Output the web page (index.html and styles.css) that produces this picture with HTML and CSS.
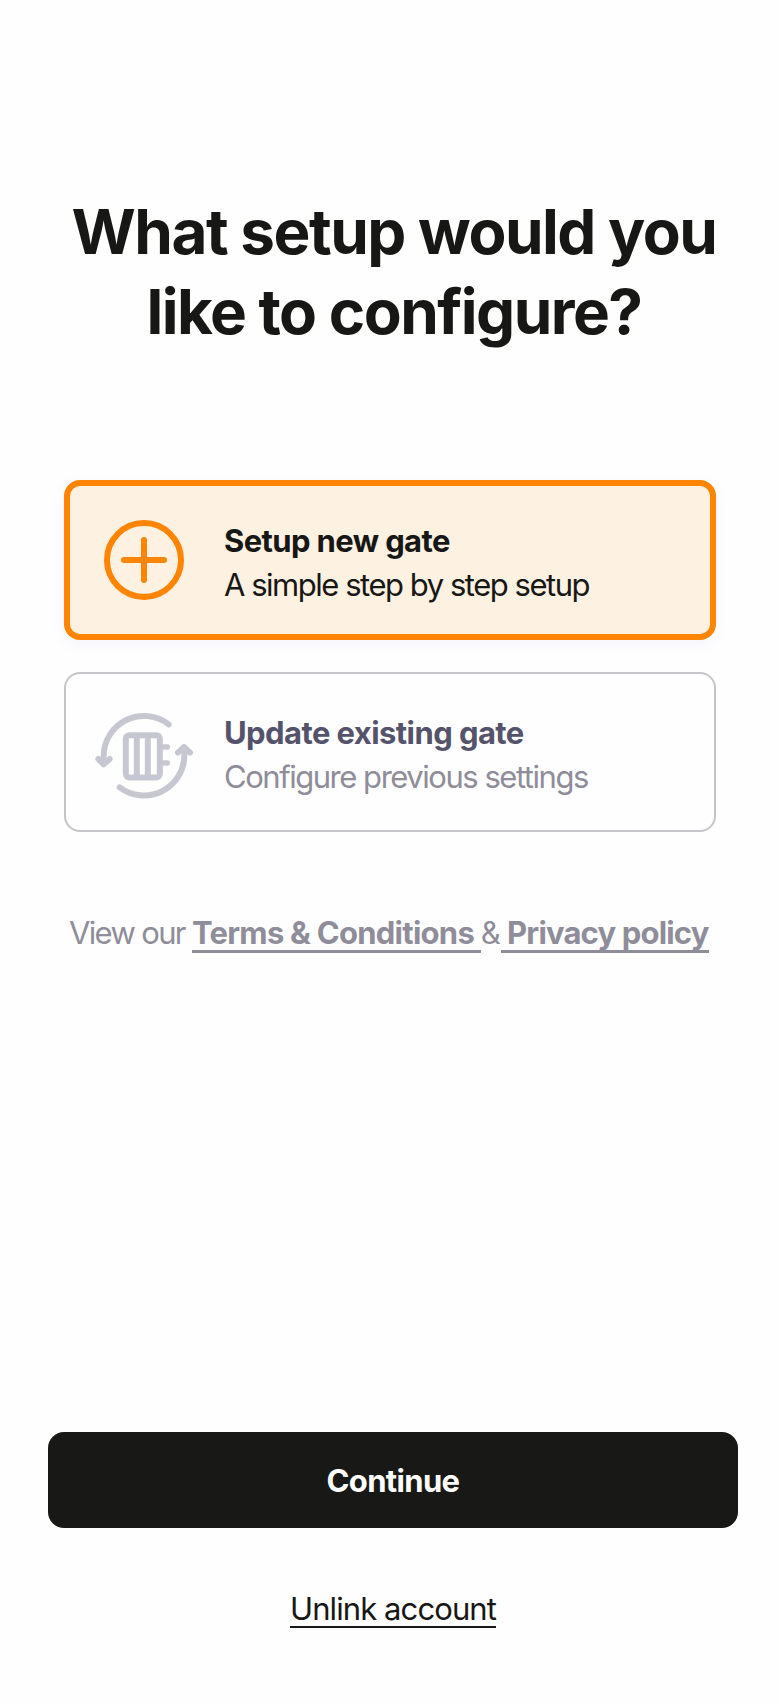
FILE: index.html
```html
<!DOCTYPE html>
<html lang="en">
<head>
<meta charset="utf-8">
<title>Gate setup</title>
<link rel="stylesheet" href="styles.css">
</head>
<body>
<main class="screen">
  <h1 class="title">What setup would you<br><span class="title-end">like to configure?</span></h1>
  <div class="options">
    <div class="option option-selected">
      <div class="option-icon">
        <svg width="80" height="80" viewBox="0 0 80 80" fill="none" stroke="#ff8500" stroke-width="6" stroke-linecap="round">
          <circle cx="40" cy="40" r="37"/>
          <path d="M40 20v40M20 40h40"/>
        </svg>
      </div>
      <div class="option-text">
        <div class="option-name name-new">Setup new gate</div>
        <div class="option-note note-new">A simple step by step setup</div>
      </div>
    </div>
    <div class="option">
      <div class="option-icon">
        <svg width="130" height="110" viewBox="-3 -9 390 330" fill="none" stroke="#c7c7d1" stroke-width="18" stroke-linecap="round" stroke-linejoin="round">
          <path d="M266 73A121 121 0 0 0 71 168V190"/>
          <path d="M55 177L71 193L89 177"/>
          <path d="M119 262A121 121 0 0 0 313 168V145"/>
          <path d="M294 158L312 141L330 158"/>
          <rect x="137.500" y="105.500" width="102" height="127" rx="11"/>
          <path d="M170.500 110V228M203.500 110V228" stroke-linecap="butt"/>
          <path d="M245 141H262M245 189H262" stroke-width="16"/>
        </svg>
      </div>
      <div class="option-text">
        <div class="option-name name-update">Update existing gate</div>
        <div class="option-note note-update">Configure previous settings</div>
      </div>
    </div>
  </div>
  <p class="legal"><span class="view">View our </span><a class="terms">Terms &amp; Conditions </a><span class="and">&amp;</span><a class="privacy"> Privacy policy</a></p>
  <div class="actions">
    <button class="continue">Continue</button>
    <a class="unlink">Unlink account</a>
  </div>
</main>
</body>
</html>
```
FILE: styles.css
```css
* { box-sizing: border-box; }
body {
  margin: 0;
  background: #fefefe;
  color: #171716;
  font-family: Inter, "Liberation Sans", sans-serif;
}
.screen {
  display: flex;
  flex-direction: column;
  width: 780px;
  height: 1704px;
  padding: 192px 42px 76px 48px;
}
.title {
  margin: 0;
  padding-left: 2px;
  text-align: center;
  white-space: nowrap;
  font-size: 62px;
  line-height: 80px;
  font-weight: 700;
  letter-spacing: -1.5px;
}
.title-end { letter-spacing: -1.55px; }
.options {
  display: flex;
  flex-direction: column;
  gap: 32px;
  width: 652px;
  margin: 128px 0 0 16px;
}
.option {
  display: flex;
  align-items: center;
  height: 160px;
  border-radius: 16px;
  box-shadow: inset 0 0 0 2px #c5c5c9;
}
.option-selected {
  background: #fdf1e1;
  box-shadow: inset 0 0 0 6px #ff8500, 0 4px 16px rgba(80, 80, 200, 0.05);
}
.option-icon {
  display: flex;
  justify-content: center;
  flex: 0 0 160px;
}
.option-text {
  padding-top: 6px;
  font-size: 31px;
  line-height: 44px;
  white-space: nowrap;
}
.option-name { font-weight: 700; }
.option-note { letter-spacing: -1.47px; }
.name-new { letter-spacing: -0.62px; }
.name-update { color: #55536b; letter-spacing: -0.58px; }
.note-update { color: #8e8d99; }
.legal {
  display: flex;
  width: 642px;
  margin: 79px 0 0 21px;
  font-size: 31px;
  line-height: 44px;
  color: #8e8d99;
  white-space: pre;
}
.view { letter-spacing: -1.65px; }
.and { letter-spacing: 0; }
.legal a {
  height: 42px;
  border-bottom: 3px solid #8e8d99;
  font-weight: 700;
  letter-spacing: -0.74px;
}
.legal .privacy { letter-spacing: -0.83px; }
.actions {
  display: flex;
  flex-direction: column;
  align-items: center;
  margin-top: auto;
}
.continue {
  width: 690px;
  height: 96px;
  padding: 2px 0 0;
  border: 0;
  border-radius: 16px;
  background: #181816;
  color: #fefefe;
  font: 700 31px/44px Inter, "Liberation Sans", sans-serif;
  letter-spacing: -0.65px;
}
.unlink {
  margin-top: 59px;
  height: 41px;
  border-bottom: 2px solid #181816;
  font-size: 31px;
  line-height: 44px;
  letter-spacing: -0.9px;
}
```
